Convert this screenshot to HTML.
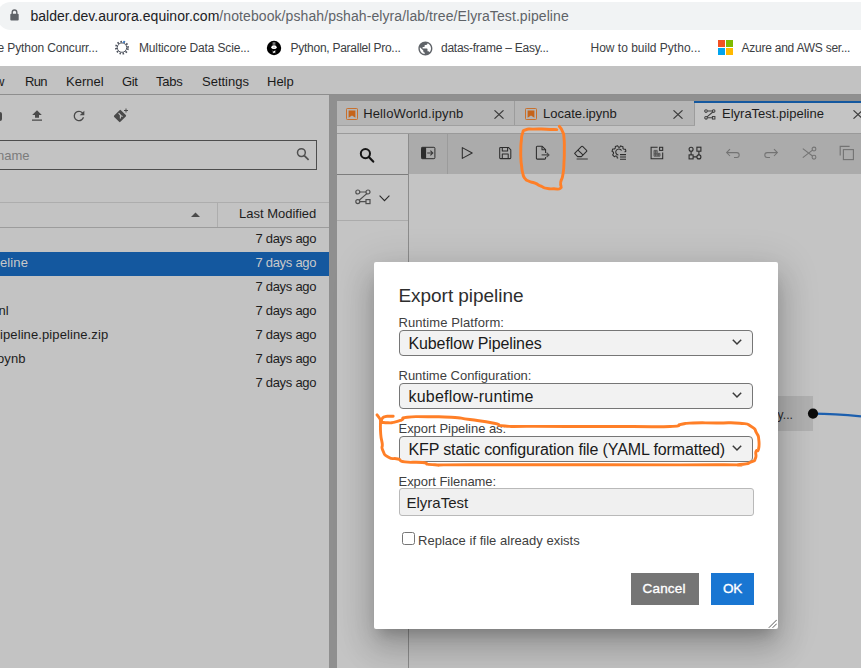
<!DOCTYPE html>
<html><head><meta charset="utf-8">
<style>
*{box-sizing:border-box;margin:0;padding:0}
html,body{width:861px;height:668px;overflow:hidden;background:#c1c1c1;font-family:"Liberation Sans",sans-serif;}
.a{position:absolute}
.t{position:absolute;white-space:pre;line-height:1}
#chrome{left:0;top:0;width:861px;height:66px;background:#fff}
#pill{left:-3px;top:2px;width:900px;height:28px;border-radius:14px;background:#f1f3f4}
.url{font-size:14px;top:9px;color:#202124}
.bm{font-size:12px;top:42px;color:#3c4043;letter-spacing:-0.15px}
#menubar{left:0;top:66px;width:861px;height:28px;background:#c2c2c2}
#menuline{left:0;top:94px;width:861px;height:1px;background:#8e8e8e}
.mi{font-size:13px;top:75px;color:#1a1a1a}
#left{left:0;top:95px;width:329px;height:573px;background:#c3c3c3}
#dock{left:329px;top:95px;width:532px;height:573px;background:#8f8f8f}
.ft{font-size:13px;color:#1d1d1d}
.dl{font-size:13px;color:#404040}
.sel{left:399px;width:354px;height:26px;background:#f2f2f2;border:1px solid #767676;border-radius:4px}
.sv{font-size:16px;color:#1a1a1a}
</style></head><body>
<!-- browser chrome -->
<div id="chrome" class="a">
  <div id="pill" class="a"></div>
  <svg class="a" style="left:9.800px;top:9.400px" width="9" height="12" viewBox="0 0 9 12"><path d="M2.2 5V3.3a2.3 2.3 0 0 1 4.6 0V5" fill="none" stroke="#5f6368" stroke-width="1.4"/><rect x="0.3" y="4.8" width="8.4" height="6.6" rx="1" fill="#5f6368"/></svg>
  <span class="t url" style="left:30.400px;letter-spacing:0.03px">balder.dev.aurora.equinor.com<span style="color:#5f6368;letter-spacing:0.085px">/notebook/pshah/pshah-elyra/lab/tree/ElyraTest.pipeline</span></span>
  
<svg class="a" style="left:114px;top:40px" width="16" height="16" viewBox="0 0 16 16"><circle cx="8" cy="7.600" r="4.700" fill="none" stroke="#555a64" stroke-width="1"/><circle cx="8" cy="7.600" r="6" fill="none" stroke="#4d525d" stroke-width="1.900" stroke-dasharray="1.500 1.640" transform="rotate(8 8 7.600)"/><path d="M9 2.700 L10.800 1.300" stroke="#3b82d6" stroke-width="1.400"/></svg>
<svg class="a" style="left:266px;top:40px" width="16" height="16" viewBox="0 0 16 16"><circle cx="8" cy="8" r="7.2" fill="#000"/><rect x="6.6" y="2.2" width="2.8" height="2.6" fill="#777"/><ellipse cx="8" cy="7.2" rx="2.7" ry="1.9" fill="#fff"/><rect x="7.2" y="6.8" width="1.6" height="0.9" fill="#aaa"/><path d="M6.9 13.3 L7.4 11.2 L9.3 10.6 L9.2 12.6 Z" fill="#fff"/><path d="M6.2 10 L7 13.4 M9.8 10 L9.4 13.4" stroke="#555" stroke-width="0.6"/></svg>
<svg class="a" style="left:416.6px;top:39.6px" width="16.8" height="16.8" viewBox="0 0 24 24"><path fill="#5f6368" d="M12 2C6.48 2 2 6.48 2 12s4.48 10 10 10 10-4.48 10-10S17.52 2 12 2zm-1 17.93c-3.95-.49-7-3.85-7-7.93 0-.62.08-1.21.21-1.79L9 15v1c0 1.1.9 2 2 2v1.93zm6.9-2.54c-.26-.81-1-1.39-1.9-1.39h-1v-3c0-.55-.45-1-1-1H8v-2h2c.55 0 1-.45 1-1V7h2c1.1 0 2-.9 2-2v-.41c2.93 1.19 5 4.06 5 7.41 0 2.08-.8 3.970-2.1 5.39z"/></svg>
<div class="a" style="left:718px;top:40px;width:7px;height:7px;background:#f25022"></div>
<div class="a" style="left:726px;top:40px;width:7px;height:7px;background:#7fba00"></div>
<div class="a" style="left:718px;top:48px;width:7px;height:7px;background:#00a4ef"></div>
<div class="a" style="left:726px;top:48px;width:7px;height:7px;background:#ffb900"></div>
<span class="t bm" style="left:-2.400px;letter-spacing:-0.125px">e Python Concurr...</span>
  <span class="t bm" style="left:139px">Multicore Data Scie...</span>
  <span class="t bm" style="left:290.500px;letter-spacing:-0.260px">Python, Parallel Pro...</span>
  <span class="t bm" style="left:441px;letter-spacing:-0.260px">datas-frame – Easy...</span>
  <span class="t bm" style="left:590.500px;letter-spacing:0px">How to build Pytho...</span>
  <span class="t bm" style="left:741.500px;letter-spacing:-0.245px">Azure and AWS ser...</span>
</div>
<!-- jupyterlab menu -->
<div id="menubar" class="a"></div>
<div id="menuline" class="a"></div>
<span class="t mi" style="left:-5px">w</span>
<span class="t mi" style="left:25px;letter-spacing:-0.700px">Run</span>
<span class="t mi" style="left:66px">Kernel</span>
<span class="t mi" style="left:122px;letter-spacing:-0.400px">Git</span>
<span class="t mi" style="left:156px;letter-spacing:-0.200px">Tabs</span>
<span class="t mi" style="left:202px">Settings</span>
<span class="t mi" style="left:267px">Help</span>

<!-- file browser -->
<div id="left" class="a"></div>
<div class="a" style="left:-6.500px;top:112px;width:8px;height:9px;border-radius:2px;background:#4a4a4a"></div>
<svg class="a" style="left:31px;top:110px" width="12" height="12" viewBox="0 0 12 12"><path d="M6 0.200 L10.800 5 H8 V7.700 H4 V5 H1.200 Z M1 9.500 H11 V10.800 H1 Z" fill="#4a4a4a"/></svg>
<svg class="a" style="left:71px;top:107.800px" width="16" height="16" viewBox="0 0 24 24"><path d="M17.65 6.35A7.96 7.96 0 0 0 12 4a8 8 0 1 0 7.73 10h-2.08A6 6 0 1 1 12 6c1.66 0 3.14.69 4.22 1.78L13 11h7V4l-2.35 2.35z" fill="#4a4a4a"/></svg>
<svg class="a" style="left:113px;top:108px" width="16" height="16" viewBox="0 0 16 16"><path d="M6.6 2.2 L1.2 7.6 a0.9 0.9 0 0 0 0 1.3 L6.1 13.8 a0.9 0.9 0 0 0 1.3 0 L12.8 8.4 a0.9 0.9 0 0 0 0 -1.3 L7.9 2.2 a0.9 0.9 0 0 0 -1.3 0 Z" fill="#4a4a4a"/><path d="M5.6 5.2 L7.4 7 V10.6 M7.4 7.6 L9.6 8.6" stroke="#c3c3c3" stroke-width="1.1" fill="none"/><path d="M13 0.5 V4.5 M11 2.5 H15" stroke="#4a4a4a" stroke-width="1"/></svg>
<div class="a" style="left:-5px;top:140px;width:322px;height:30px;border:1px solid #4d4d4d"></div>
<span class="t" style="left:-3px;top:149px;font-size:13px;color:#7b7b7b;letter-spacing:0px">name</span>
<svg class="a" style="left:296px;top:147px" width="14" height="14" viewBox="0 0 14 14"><circle cx="5.4" cy="5.6" r="3.9" fill="none" stroke="#505050" stroke-width="1.5"/><path d="M8.3 8.6 L12.6 12.9" stroke="#505050" stroke-width="1.7"/></svg>
<div class="a" style="left:0;top:202px;width:329px;height:1px;background:#adadad"></div>
<div class="a" style="left:0;top:227px;width:329px;height:1px;background:#9c9c9c"></div>
<div class="a" style="left:217px;top:203px;width:1px;height:24px;background:#adadad"></div>
<svg class="a" style="left:191px;top:212px" width="9" height="5" viewBox="0 0 9 5"><path d="M0 5 L4.5 0.4 L9 5 Z" fill="#4a4a4a"/></svg>
<span class="t ft" style="left:239px;top:207px">Last Modified</span>
<div class="a" style="left:0;top:252px;width:329px;height:24px;background:#14589f"></div>
<span class="t ft" style="left:255.400px;top:232px;letter-spacing:-0.27px;color:#1d1d1d">7 days ago</span>
<span class="t ft" style="left:255.400px;top:256px;letter-spacing:-0.27px;color:#c9c9c9">7 days ago</span>
<span class="t ft" style="left:255.400px;top:280px;letter-spacing:-0.27px;color:#1d1d1d">7 days ago</span>
<span class="t ft" style="left:255.400px;top:304px;letter-spacing:-0.27px;color:#1d1d1d">7 days ago</span>
<span class="t ft" style="left:255.400px;top:328px;letter-spacing:-0.27px;color:#1d1d1d">7 days ago</span>
<span class="t ft" style="left:255.400px;top:352px;letter-spacing:-0.27px;color:#1d1d1d">7 days ago</span>
<span class="t ft" style="left:255.400px;top:376px;letter-spacing:-0.27px;color:#1d1d1d">7 days ago</span>
<span class="t ft" style="left:0px;top:256px;letter-spacing:0.1px;color:#c9c9c9">eline</span>
<span class="t ft" style="left:-1.500px;top:304px;letter-spacing:0.1px;color:#1d1d1d">nl</span>
<span class="t ft" style="left:0px;top:328px;letter-spacing:0.1px;color:#1d1d1d">ipeline.pipeline.zip</span>
<span class="t ft" style="left:-3px;top:352px;letter-spacing:0.1px;color:#1d1d1d">oynb</span>

<!-- dock panel -->
<div id="dock" class="a"></div>
<!-- tabs -->
<div class="a" style="left:337px;top:101px;width:178px;height:24px;background:#b5b5b5;border-right:1px solid #9c9c9c"></div>
<div class="a" style="left:515px;top:101px;width:180px;height:24px;background:#b5b5b5;border-right:1px solid #9c9c9c"></div>
<div class="a" style="left:337px;top:125px;width:524px;height:1px;background:#a0a0a0"></div>
<div class="a" style="left:337px;top:126px;width:524px;height:7px;background:#c4c4c4"></div>
<div class="a" style="left:695px;top:101px;width:166px;height:32px;background:#c4c4c4"></div>
<div class="a" style="left:694px;top:101px;width:167px;height:2px;background:#14589f"></div>
<div class="a" style="left:337px;top:133px;width:524px;height:1px;background:#9a9a9a"></div>
<svg class="a" style="left:346px;top:108px" width="12" height="12" viewBox="0 0 12 12"><rect x="0.500" y="0.500" width="11" height="11" rx="0.800" fill="none" stroke="#c9702c" stroke-width="1"/><path d="M2.600 2.400 H9.400 V9.700 L6 7.600 L2.600 9.700 Z" fill="#c5641b"/></svg>
<svg class="a" style="left:524.500px;top:108px" width="12" height="12" viewBox="0 0 12 12"><rect x="0.500" y="0.500" width="11" height="11" rx="0.800" fill="none" stroke="#c9702c" stroke-width="1"/><path d="M2.600 2.400 H9.400 V9.700 L6 7.600 L2.600 9.700 Z" fill="#c5641b"/></svg>
<span class="t ft" style="left:363.200px;top:107px;letter-spacing:0.140px">HelloWorld.ipynb</span>
<span class="t ft" style="left:543px;top:107px">Locate.ipynb</span>
<span class="t ft" style="left:722px;top:107px">ElyraTest.pipeline</span>
<svg class="a" style="left:494px;top:110px" width="10" height="9" viewBox="0 0 10 9"><path d="M0.5 0.3 L9.5 8.7 M9.5 0.3 L0.5 8.7" stroke="#3a3a3a" stroke-width="1.1"/></svg>
<svg class="a" style="left:673px;top:110px" width="10" height="9" viewBox="0 0 10 9"><path d="M0.5 0.3 L9.5 8.7 M9.5 0.3 L0.5 8.7" stroke="#3a3a3a" stroke-width="1.1"/></svg>
<svg class="a" style="left:853px;top:110px" width="10" height="9" viewBox="0 0 10 9"><path d="M0.5 0.3 L9.5 8.7 M9.5 0.3 L0.5 8.7" stroke="#3a3a3a" stroke-width="1.1"/></svg>
<svg class="a" style="left:704.300px;top:108.500px" width="12" height="11" viewBox="0 0 16 15"><g fill="none" stroke="#3f3f3f" stroke-width="1.400"><circle cx="2.6" cy="2.8" r="1.8"/><circle cx="13" cy="2.8" r="1.8"/><circle cx="2.6" cy="12" r="1.8"/><rect x="11.3" y="10.3" width="3.4" height="3.4"/><path d="M4.4 2.8 H11.2 M4.4 12 H11.3 M11.8 4.1 L3.9 10.7"/></g></svg>
<!-- canvas area -->
<div class="a" style="left:337px;top:134px;width:524px;height:534px;background:#c4c4c4"></div>
<div class="a" style="left:409px;top:134px;width:452px;height:40px;background:#ababab"></div>
<div class="a" style="left:447px;top:134px;width:1px;height:40px;background:#9b9b9b"></div>
<div class="a" style="left:408px;top:134px;width:1px;height:534px;background:#8c8c8c"></div>
<div class="a" style="left:337px;top:174px;width:71px;height:1px;background:#7d7d7d"></div>
<div class="a" style="left:337px;top:220px;width:71px;height:1px;background:#ababab"></div>

<!-- palette icons -->
<svg class="a" style="left:359px;top:147px" width="16" height="16" viewBox="0 0 16 16"><circle cx="6.4" cy="6.6" r="4.6" fill="none" stroke="#161616" stroke-width="2"/><path d="M9.8 10 L14.2 14.6" stroke="#161616" stroke-width="2.2" stroke-linecap="round"/></svg>
<svg class="a" style="left:355px;top:189px" width="16" height="16" viewBox="0 0 16 16"><g fill="none" stroke="#4f4f4f" stroke-width="1.2"><circle cx="2.8" cy="3" r="2"/><circle cx="13" cy="3" r="2"/><circle cx="2.8" cy="12.6" r="2"/><rect x="11" y="10.6" width="4" height="4"/><path d="M4.8 3 H11 M4.8 12.6 H11 M11.8 4.6 L4.2 11.2"/></g></svg>
<svg class="a" style="left:379px;top:195px" width="11" height="7" viewBox="0 0 11 7"><path d="M0.6 0.6 L5.5 5.6 L10.4 0.6" fill="none" stroke="#2a2a2a" stroke-width="1.1"/></svg>
<!-- toolbar icons -->
<svg class="a" style="left:421px;top:146px" width="15" height="14" viewBox="0 0 15 14"><rect x="0.5" y="1.3" width="13.4" height="11.4" rx="1" fill="none" stroke="#2d2d2d" stroke-width="1"/><rect x="0.5" y="1.3" width="4.6" height="11.4" fill="#2d2d2d"/><path d="M6.2 7 H11.6 M9.4 4.6 L11.8 7 L9.4 9.4" fill="none" stroke="#3a3a3a" stroke-width="1.1"/></svg>
<svg class="a" style="left:461px;top:146px" width="13" height="14" viewBox="0 0 13 14"><path d="M1.3 1.6 L11.2 7 L1.3 12.4 Z" fill="none" stroke="#2d2d2d" stroke-width="1.05" stroke-linejoin="round"/></svg>
<svg class="a" style="left:499px;top:146px" width="13" height="14" viewBox="0 0 13 14"><g fill="none" stroke="#2d2d2d" stroke-width="1.05" stroke-linejoin="round"><path d="M0.7 2.2 a0.8 0.8 0 0 1 0.8 -0.8 H9.4 L11.8 3.8 V11.8 a0.8 0.8 0 0 1 -0.8 0.8 H1.5 a0.8 0.8 0 0 1 -0.8 -0.8 Z"/><path d="M3.3 1.6 V4.9 H8.6 V1.6"/><path d="M3.3 12.4 V8 H9.2 V12.4"/></g></svg>
<svg class="a" style="left:535px;top:145px" width="16" height="16" viewBox="0 0 16 16"><g fill="none" stroke="#2d2d2d" stroke-width="1.05" stroke-linejoin="round"><path d="M10.6 8 V4.6 L7.2 1.3 H2.2 a0.8 0.8 0 0 0 -0.8 0.8 V13.3 a0.8 0.8 0 0 0 0.8 0.8 H9.8 a0.8 0.8 0 0 0 0.8 -0.8 V12"/><path d="M7 1.5 V4.8 H10.4"/></g><path d="M6.6 9.9 H13.6 M11.6 7.6 L14 9.9 L11.6 12.2" fill="none" stroke="#4a4a4a" stroke-width="1.1"/></svg>
<svg class="a" style="left:573px;top:145px" width="16" height="16" viewBox="0 0 16 16"><g fill="none" stroke="#2d2d2d" stroke-width="1.05" stroke-linejoin="round"><path d="M1.6 8.4 L8.6 1.4 a0.7 0.7 0 0 1 1 0 L13.6 5.4 a0.7 0.7 0 0 1 0 1 L8.4 11.6 H4.6 Z"/><path d="M5 5.2 L10.2 10.2"/></g><path d="M3.6 14 H14.8" stroke="#4a4a4a" stroke-width="1.2"/></svg>
<svg class="a" style="left:611px;top:145px" width="16" height="16" viewBox="0 0 16 16"><g fill="none" stroke="#2d2d2d" stroke-width="1.05" stroke-linejoin="round"><path d="M7.2 13 H6.3 L5.9 11.4 L4.9 10.9 L3.3 11.7 L1.6 9.9 L2.5 8.4 V7.2 L1 6.3 L1.7 4 L3.4 4 L4.3 3.2 L4.3 1.5 L6.6 0.8 L7.6 2.3 H8.7 L9.7 0.9 L12 1.7 L11.9 3.4 L12.7 4.2 L14.4 4.2 L14.9 6.2 L13.6 7"/><path d="M10.6 5.6 A3.1 3.1 0 1 0 7.4 10.1"/></g><path d="M9 9.6 H15 M9 11.9 H15 M9 14.2 H15" stroke="#2d2d2d" stroke-width="1.05"/></svg>
<svg class="a" style="left:650px;top:146px" width="14" height="14" viewBox="0 0 14 14"><g fill="none" stroke="#2d2d2d" stroke-width="1.05"><path d="M7.6 1.3 H1.1 V12.7 H12.7 V6.6"/><rect x="9.6" y="1.3" width="3.1" height="3.1"/></g><g fill="none" stroke="#555" stroke-width="0.9"><path d="M4 4.4 H7.2 V7.4 H10 V10.2 H4 Z M4 7.4 H7.2 V10.2 M5.6 4.4 V10.2 M4 8.8 H10 M8.6 7.4 V10.2 M4 5.9 H7.2"/></g></svg>
<svg class="a" style="left:688px;top:146px" width="14" height="14" viewBox="0 0 14 14"><g fill="none" stroke="#2d2d2d" stroke-width="1.1"><circle cx="3.1" cy="3.2" r="2"/><rect x="8.9" y="1.2" width="4" height="4"/><rect x="1.1" y="8.9" width="4" height="4"/><circle cx="10.9" cy="10.9" r="2"/><path d="M3.1 5.2 V8.9 M10.9 5.2 V8.9 M5.1 10.9 H8.9"/></g></svg>
<svg class="a" style="left:725px;top:146px" width="16" height="14" viewBox="0 0 16 14"><path d="M5 3.200 L1.600 6.600 L5 10 M1.800 6.600 H11.800 A2.400 2.400 0 0 1 11.800 11.400 H9" fill="none" stroke="#737373" stroke-width="1.050"/></svg>
<svg class="a" style="left:763px;top:146px" width="16" height="14" viewBox="0 0 16 14"><path d="M11 3.200 L14.400 6.600 L11 10 M14.200 6.600 H4.200 A2.400 2.400 0 0 0 4.200 11.400 H7" fill="none" stroke="#737373" stroke-width="1.050"/></svg>
<svg class="a" style="left:802px;top:146px" width="15" height="14" viewBox="0 0 15 14"><g fill="none" stroke="#737373" stroke-width="1.05"><circle cx="12" cy="3" r="1.9"/><circle cx="12" cy="11.2" r="1.9"/><path d="M10.5 4.2 L0.8 11.6 M10.5 10 L0.8 2.6"/></g></svg>
<svg class="a" style="left:839px;top:145px" width="16" height="16" viewBox="0 0 16 16"><g fill="none" stroke="#737373" stroke-width="1.1"><rect x="4.4" y="4.6" width="10" height="10"/><path d="M1.2 10.6 V1.4 H10.6"/></g></svg>

<!-- canvas node -->
<div class="a" style="left:777px;top:396px;width:36px;height:35px;background:#b1b1b1"></div>
<span class="t" style="left:777.500px;top:409px;font-size:12px;color:#2a2a2a;letter-spacing:0.100px">y...</span>
<svg class="a" style="left:800px;top:400px" width="61" height="26" viewBox="0 0 61 26"><path d="M13 13.600 C 30 13.700, 45 14.800, 61 16.400" fill="none" stroke="#1c5fae" stroke-width="2.100"/><circle cx="13" cy="13.600" r="5.100" fill="#0b0b0b"/></svg>
<!-- dialog -->
<div class="a" id="dlg" style="left:374px;top:262px;width:404px;height:367px;background:#fff;border-radius:2px;box-shadow:0 10px 13px -6px rgba(0,0,0,.2),0 20px 31px 3px rgba(0,0,0,.14),0 8px 38px 7px rgba(0,0,0,.12)"></div>
<span class="t" style="left:398.5px;top:286px;font-size:19px;color:#2e2e2e;letter-spacing:-0.05px">Export pipeline</span>
<span class="t dl" style="left:398.5px;top:316px;letter-spacing:0.09px">Runtime Platform:</span>
<div class="a sel" style="top:330px"></div>
<span class="t sv" style="left:408.5px;top:336px;letter-spacing:-0.12px">Kubeflow Pipelines</span>
<span class="t dl" style="left:398.5px;top:369px">Runtime Configuration:</span>
<div class="a sel" style="top:383px"></div>
<span class="t sv" style="left:408.5px;top:389px;letter-spacing:0.2px">kubeflow-runtime</span>
<span class="t dl" style="left:398.5px;top:422px;letter-spacing:-0.04px">Export Pipeline as:</span>
<div class="a sel" style="top:436px"></div>
<span class="t sv" style="left:408.5px;top:442px;letter-spacing:-0.13px">KFP static configuration file (YAML formatted)</span>
<span class="t dl" style="left:398.5px;top:475px;letter-spacing:-0.04px">Export Filename:</span>
<div class="a" style="left:399px;top:488px;width:355px;height:28px;background:#f0f0f0;border:1px solid #b9b9b9;border-radius:3px"></div>
<span class="t" style="left:406.5px;top:495px;font-size:15px;color:#1f1f1f">ElyraTest</span>
<div class="a" style="left:402px;top:532px;width:13px;height:13px;background:#fff;border:1px solid #767676;border-radius:2.5px"></div>
<span class="t dl" style="left:418px;top:534px;letter-spacing:0.02px">Replace if file already exists</span>
<div class="a" style="left:631px;top:573px;width:68px;height:32px;background:#757575"></div>
<span class="t" style="left:642.500px;top:582px;font-size:13.500px;color:#fff;letter-spacing:0.200px;-webkit-text-stroke:0.350px #fff">Cancel</span>
<div class="a" style="left:711px;top:573px;width:43px;height:32px;background:#1976d2"></div>
<span class="t" style="left:723px;top:582px;font-size:13.500px;color:#fff;letter-spacing:-0.300px;-webkit-text-stroke:0.350px #fff">OK</span>
<svg class="a" style="left:768px;top:619px" width="9" height="9" viewBox="0 0 9 9"><path d="M0.800 8.800 L8.800 0.800 M4.600 8.800 L8.800 4.600" stroke="#5a5a5a" stroke-width="1"/></svg>
<svg class="a" style="left:732px;top:339px" width="10" height="7" viewBox="0 0 10 7"><path d="M0.8 0.8 L5 5 L9.2 0.8" fill="none" stroke="#3a3a3a" stroke-width="1.5"/></svg>
<svg class="a" style="left:732px;top:392px" width="10" height="7" viewBox="0 0 10 7"><path d="M0.8 0.8 L5 5 L9.2 0.8" fill="none" stroke="#3a3a3a" stroke-width="1.5"/></svg>
<svg class="a" style="left:732px;top:445px" width="10" height="7" viewBox="0 0 10 7"><path d="M0.8 0.8 L5 5 L9.2 0.8" fill="none" stroke="#3a3a3a" stroke-width="1.5"/></svg>

<!-- annotations -->
<svg class="a" style="left:0;top:0;pointer-events:none" width="861" height="668" viewBox="0 0 861 668"><g fill="none" stroke="#ff7f27" stroke-width="2.9" stroke-linecap="round" stroke-linejoin="round">
<path d="M556.8 129.6 C553.2 129.5 553.6 129.4 546.0 129.2 C538.4 129.0 540.8 128.9 534.0 129.1 C527.2 129.3 529.3 128.3 525.5 129.8 C521.7 131.3 523.9 129.8 522.5 133.5 C521.1 137.2 521.9 135.5 521.3 141.0 C520.7 146.5 520.9 144.0 520.8 150.0 C520.7 156.0 520.6 153.7 520.9 159.0 C521.2 164.3 521.0 161.3 521.6 166.0 C522.2 170.7 521.6 168.8 522.7 173.0 C523.8 177.2 522.9 175.7 525.0 178.5 C527.1 181.3 525.7 179.7 529.0 181.3 C532.3 182.9 531.0 181.6 535.0 183.2 C539.0 184.8 537.0 184.5 541.0 186.2 C545.0 187.9 542.7 187.5 547.0 188.4 C551.3 189.3 549.6 188.8 554.0 188.8 C558.4 188.8 558.1 189.9 560.3 188.3 C562.5 186.7 560.4 186.4 560.6 184.0 C560.8 181.6 560.2 184.3 561.0 181.0 C561.8 177.7 562.0 180.4 563.0 174.0 C564.0 167.6 563.6 169.8 564.0 161.8 C564.4 153.8 564.3 157.9 564.3 150.0 C564.3 142.1 564.6 144.2 564.0 138.0 C563.4 131.8 564.1 135.4 562.5 131.5 C560.9 127.6 560.4 128.0 559.3 126.3"/>
<path d="M381.6 422.4 C383.7 422.5 384.1 422.8 388.0 422.8 C391.9 422.8 388.7 423.3 393.2 422.4 C397.7 421.5 396.7 421.8 401.4 420.1 C406.1 418.4 398.3 418.3 407.2 417.2 C416.1 416.1 413.3 416.8 428.0 416.8 C442.7 416.8 437.3 416.3 451.3 417.2 C465.3 418.1 455.7 417.5 469.9 419.5 C484.1 421.5 482.3 421.0 494.0 423.2 C505.7 425.4 491.3 424.9 505.0 426.0 C518.7 427.1 503.3 426.2 535.0 426.4 C566.7 426.6 567.3 426.5 600.0 426.5 C632.7 426.5 609.7 426.5 633.0 426.5 C656.3 426.5 653.8 427.3 670.0 426.5 C686.2 425.7 673.9 425.4 681.6 424.2 C689.3 423.0 681.6 423.4 693.2 423.0 C704.8 422.6 701.0 422.9 716.5 423.0 C732.0 423.1 728.1 422.0 739.7 423.2 C751.3 424.4 745.7 423.3 751.3 426.5 C756.9 429.7 754.0 428.5 756.5 432.9 C759.0 437.3 758.1 434.4 758.8 439.8 C759.5 445.2 759.4 445.2 758.5 449.1 C757.6 453.0 757.0 448.4 756.0 451.5 C755.0 454.6 757.0 454.9 755.4 458.4 C753.8 461.9 756.5 459.9 751.3 461.9 C746.1 463.9 751.3 463.5 739.7 464.5 C728.1 465.5 763.1 464.7 716.5 464.8 C669.9 464.9 682.2 464.8 600.0 464.8 C517.8 464.8 525.0 464.8 470.0 464.8 C415.0 464.8 450.9 465.6 435.0 464.8 C419.1 464.0 432.4 463.5 422.3 462.5 C412.2 461.5 412.9 463.1 404.8 461.9 C396.7 460.7 403.3 460.5 397.9 459.0 C392.5 457.5 393.6 460.2 388.6 457.3 C383.6 454.4 384.9 455.0 382.8 450.3 C380.7 445.6 382.9 448.7 382.2 443.3 C381.5 437.9 381.3 441.5 380.7 434.0 C380.1 426.5 380.6 425.1 380.5 420.7"/>
<path d="M393.2 416.3 C391.8 416.3 391.7 416.1 389.0 416.2 C386.3 416.3 387.2 416.0 385.1 416.6 C383.0 417.2 383.8 416.7 382.6 418.0 C381.4 419.3 381.8 419.7 381.4 420.5"/>
<path d="M377.0 414.9 C377.7 415.8 377.7 415.6 379.0 417.5 C380.3 419.4 380.3 419.6 381.0 420.7"/>
</g></svg>
</body></html>
